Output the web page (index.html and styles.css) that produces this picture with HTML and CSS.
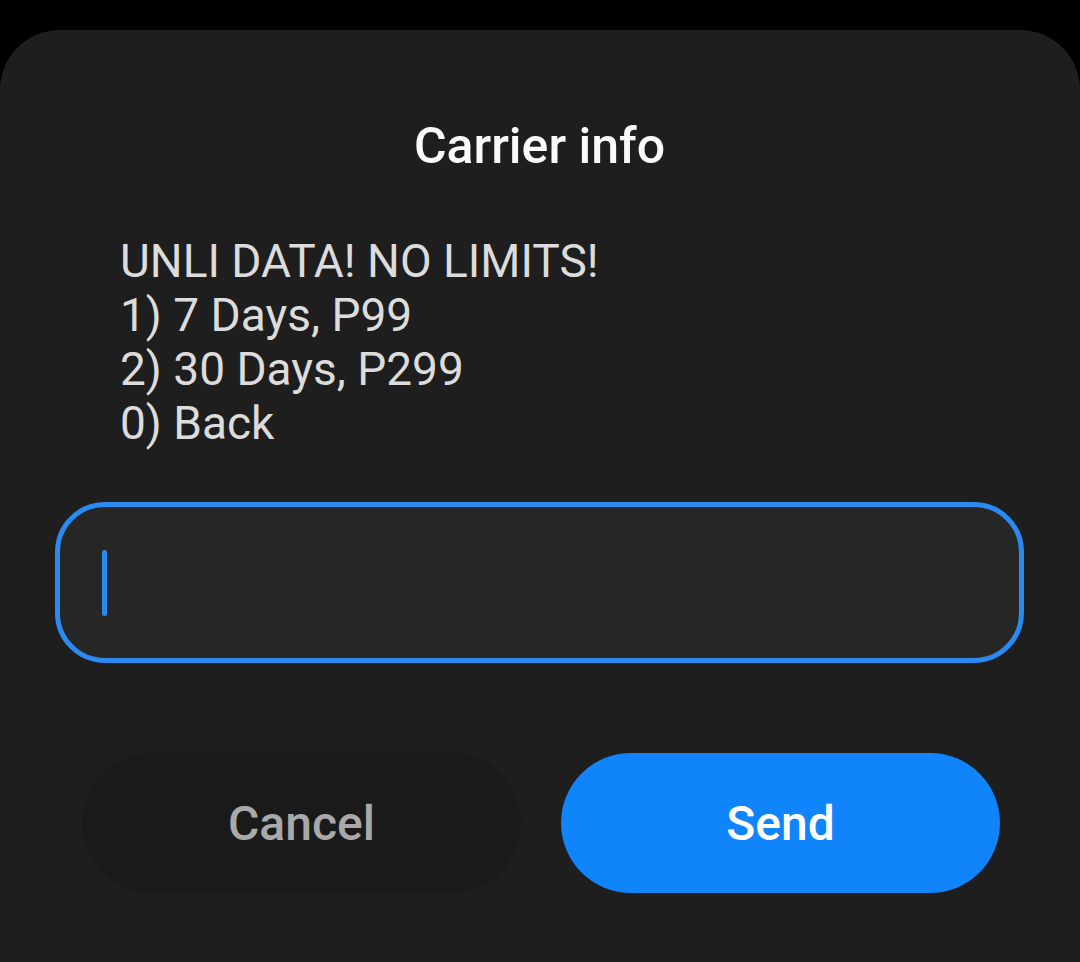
FILE: index.html
```html
<!DOCTYPE html>
<html lang="en">
<head>
  <meta charset="UTF-8" />
  <meta name="viewport" content="width=device-width, initial-scale=1.0" />
  <title>Carrier info</title>
  <link rel="stylesheet" href="styles.css">
</head>
<body>

  <div class="dialog">
    <h2 class="dialog-title">Carrier info</h2>

    <div class="ussd-message">
      <div>UNLI DATA! NO LIMITS!</div>
      <div>1) 7 Days, P99</div>
      <div>2) 30 Days, P299</div>
      <div>0) Back</div>
    </div>

    <div class="reply-field">
      <span class="caret"></span>
    </div>

    <div class="dialog-actions">
      <button class="btn btn-cancel">Cancel</button>
      <button class="btn btn-send">Send</button>
    </div>
  </div>

</body>
</html>
```

FILE: styles.css
```css
:root {
  --accent: #0f84fb;
  --field-border: #2a8af0;
  --dialog-bg: #1e1e1e;
  --text-color: #dcdcdc;
}

* {
  margin: 0;
  padding: 0;
  box-sizing: border-box;
  font-family: Roboto, "Liberation Sans", sans-serif;
}

html, body {
  height: 100%;
  background-color: #000;
}

body {
  padding-top: 30px;
  overflow: hidden;
}

.dialog {
  background: var(--dialog-bg);
  border-radius: 60px 60px 0 0;
  height: 100%;
  padding: 88px 56px 0 55px;
}

.dialog-title {
  text-align: center;
  color: #fafafa;
  font-size: 50px;
  font-weight: 500;
  line-height: 56px;
}

.ussd-message {
  margin-top: 60px;
  padding-left: 65px;
  color: var(--text-color);
  font-size: 46px;
  line-height: 54px;
}

.reply-field {
  margin-top: 52px;
  height: 161px;
  border: 5px solid var(--field-border);
  border-radius: 50px;
  background: #262626;
  display: flex;
  align-items: center;
  padding-left: 42px;
}

.caret {
  width: 5px;
  height: 66px;
  border-radius: 3px;
  background: var(--field-border);
}

.dialog-actions {
  display: flex;
  gap: 40px;
  margin-top: 90px;
  padding: 0 24px 0 27px;
}

.btn {
  flex: 1;
  height: 140px;
  border: none;
  border-radius: 70px;
  font-size: 48px;
  font-weight: 500;
  cursor: pointer;
}

.btn-cancel {
  background: #1a1a1a;
  color: #a9a9a9;
}

.btn-send {
  background: var(--accent);
  color: #fff;
}
```
